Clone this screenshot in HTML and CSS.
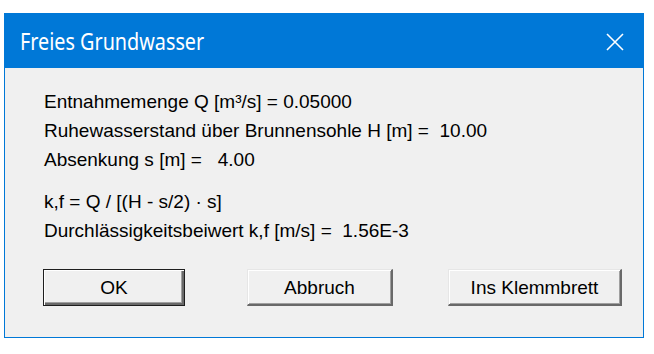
FILE: index.html
```html
<!DOCTYPE html>
<html lang="de">
<head>
<meta charset="utf-8">
<title>Freies Grundwasser</title>
<link rel="stylesheet" href="styles.css">
</head>
<body>
<div class="window">
  <div class="titlebar">
    <span class="title">Freies Grundwasser</span>
    <svg class="close" width="18" height="18" viewBox="0 0 18 18"><path d="M1 1 L17 17 M17 1 L1 17" stroke="#fff" stroke-width="1.6" fill="none"/></svg>
  </div>
  <div class="client">
    <div class="group">
      <div class="line">Entnahmemenge Q [m³/s] = 0.05000</div>
      <div class="line">Ruhewasserstand über Brunnensohle H [m] =&nbsp; 10.00</div>
      <div class="line">Absenkung s [m] = &nbsp; 4.00</div>
    </div>
    <div class="group group-2">
      <div class="line">k,f = Q / [(H - s/2) · s]</div>
      <div class="line">Durchlässigkeitsbeiwert k,f [m/s] =&nbsp; 1.56E-3</div>
    </div>
    <div class="buttons">
      <div class="btn btn-default btn-ok"><span>OK</span></div>
      <div class="btn btn-cancel"><span>Abbruch</span></div>
      <div class="btn btn-clip"><span>Ins Klemmbrett</span></div>
    </div>
  </div>
</div>
</body>
</html>
```
FILE: styles.css
```css
html, body {
  margin: 0;
  padding: 0;
  background: #ffffff;
}
body {
  width: 654px;
  height: 354px;
  overflow: hidden;
}
.window {
  margin: 13px 0 0 4px;
  width: 640px;
  height: 325px;
  background: #0078d7;
  display: flex;
  flex-direction: column;
}
.titlebar {
  height: 55px;
  display: flex;
  align-items: center;
  justify-content: space-between;
  padding: 0 20px 0 16px;
  box-sizing: border-box;
}
.title {
  font-family: "Noto Sans", "Open Sans", sans-serif;
  font-size: 19.8px;
  color: #ffffff;
  display: inline-block;
  transform: scaleY(1.15);
  margin-top: 1px;
}
.close {
  display: block;
  margin-top: 2px;
}
.client {
  flex: 1;
  margin: 0 1px 1px 1px;
  background: #f0f0f0;
  padding: 19px 0 0 39px;
  font-family: "Liberation Sans", Arial, sans-serif;
  font-size: 19px;
  color: #000000;
}
.line {
  height: 29px;
  line-height: 29px;
  white-space: pre;
}
.group-2 {
  margin-top: 13px;
}
.buttons {
  display: flex;
  margin-top: 24px;
  margin-left: -1px;
}
.btn {
  height: 37px;
  box-sizing: border-box;
  display: flex;
  align-items: center;
  justify-content: center;
  background: #f0f0f0;
  border-style: solid;
  border-width: 1px 2px 2px 1px;
  border-color: #e6e6e6 #696969 #696969 #e6e6e6;
  box-shadow: inset 1px 1px #ffffff, inset -1px -1px #a0a0a0;
}
.btn span {
  display: inline-block;
  padding-top: 1px;
}
.btn-default {
  border: 1px solid #1e1e1e;
  box-shadow: inset 1px 1px #ffffff, inset -2px -2px #696969, inset -3px -3px #a0a0a0;
}
.btn-ok {
  width: 142px;
}
.btn-cancel {
  width: 146px;
  margin-left: 62px;
}
.btn-clip {
  width: 174px;
  margin-left: 55px;
}
```
